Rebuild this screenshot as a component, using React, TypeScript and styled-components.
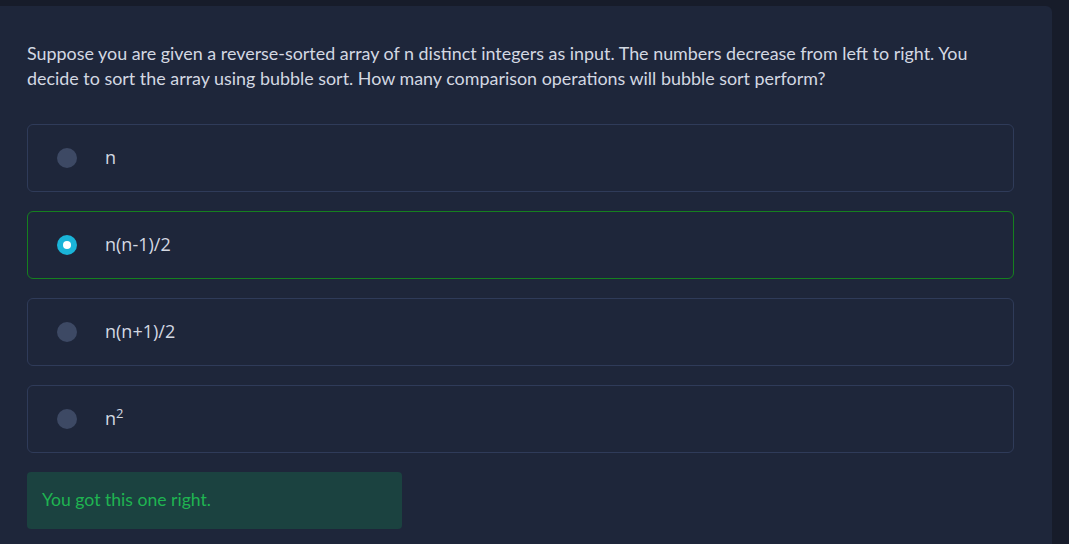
import React from "react";
import styled, { createGlobalStyle } from "styled-components";

const Global = createGlobalStyle`
  html, body { margin: 0; padding: 0; background: #171c2a; }
  body { font-family: Lato, "Open Sans", sans-serif; overflow: hidden; }
`;

const Page = styled.div`
  height: 544px;
  padding: 6px 17px 0 0;
  box-sizing: border-box;
  background: #171c2a;
`;

const Card = styled.div`
  background: #1e263a;
  border-top-right-radius: 6px;
  height: 100%;
  padding: 35px 38px 0 27px;
  box-sizing: border-box;
`;

const Question = styled.p`
  margin: 0 0 33px;
  font-family: Lato, sans-serif;
  font-size: 17.9px;
  line-height: 25px;
  color: #d3d8e2;
`;

const Options = styled.div`
  display: flex;
  flex-direction: column;
  gap: 19px;
`;

const Option = styled.label<{ $correct?: boolean }>`
  display: flex;
  align-items: center;
  height: 68px;
  box-sizing: border-box;
  padding-left: 29px;
  border: 1px solid ${(p) => (p.$correct ? "#15801f" : "#2f3b59")};
  border-radius: 6px;
  cursor: pointer;
`;

const Radio = styled.span<{ $checked?: boolean }>`
  width: 20px;
  height: 20px;
  border-radius: 50%;
  background: ${(p) => (p.$checked ? "#1ab4d8" : "#3d4964")};
  display: flex;
  align-items: center;
  justify-content: center;
  margin-right: 28px;
  flex-shrink: 0;
  &::after {
    content: "";
    display: ${(p) => (p.$checked ? "block" : "none")};
    width: 8px;
    height: 8px;
    border-radius: 50%;
    background: #ffffff;
  }
`;

const OptionText = styled.span`
  font-family: "Open Sans", sans-serif;
  font-size: 18px;
  color: #d3d8e2;
  margin-top: -3px;
  sup {
    font-size: 13px;
    line-height: 0;
  }
`;

const Feedback = styled.div`
  margin-top: 19px;
  width: 375px;
  height: 57px;
  box-sizing: border-box;
  background: #1b4240;
  border-radius: 4px;
  display: flex;
  align-items: center;
  padding: 0 0 3px 15px;
  font-family: Lato, sans-serif;
  font-size: 17.6px;
  color: #1fb451;
`;

const options: { label: React.ReactNode; checked?: boolean }[] = [
  { label: "n" },
  { label: "n(n-1)/2", checked: true },
  { label: "n(n+1)/2" },
  { label: <>n<sup>2</sup></> },
];

export default function App() {
  return (
    <>
      <Global />
      <Page>
        <Card>
          <Question>
            Suppose you are given a reverse-sorted array of n distinct integers as input. The numbers decrease from left to right. You decide to sort the array using bubble sort. How many comparison operations will bubble sort perform?
          </Question>
          <Options>
            {options.map((o, i) => (
              <Option key={i} $correct={o.checked}>
                <Radio $checked={o.checked} />
                <OptionText>{o.label}</OptionText>
              </Option>
            ))}
          </Options>
          <Feedback>You got this one right.</Feedback>
        </Card>
      </Page>
    </>
  );
}
